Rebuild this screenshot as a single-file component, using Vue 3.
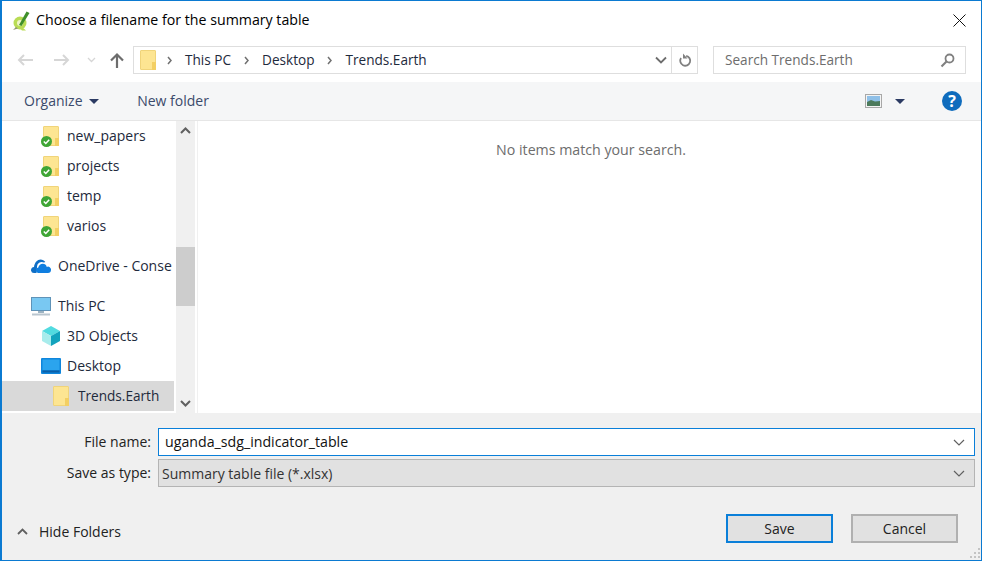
<template>
  <div class="dialog">
    <header class="titlebar">
      <svg class="app-icon" width="18" height="20" viewBox="0 0 18 20">
        <circle cx="8" cy="12" r="6.500" fill="#b9dc55" />
        <circle cx="8" cy="12" r="3" fill="#eef5c8" />
        <path d="M10 16l4 3.500h-4l-3-3z" fill="#b9dc55" />
        <path d="M7 14 14.500.5 17.500 2 9.500 15z" fill="#3f8f2a" />
        <path d="M1 19l3-3 2 1.500z" fill="#8d9470" />
      </svg>
      <span class="title">Choose a filename for the summary table</span>
      <svg class="close" width="13" height="13" viewBox="0 0 13 13">
        <path d="M.5.5l12 12M12.500.5l-12 12" stroke="#111" stroke-width="1" fill="none" />
      </svg>
    </header>

    <nav class="navbar">
      <div class="arrows">
        <svg class="back" width="16" height="14" viewBox="0 0 16 14">
          <path d="M16 7H2M7 2 2 7l5 5" stroke="#d6d6d6" stroke-width="2" fill="none" />
        </svg>
        <svg class="forward" width="16" height="14" viewBox="0 0 16 14">
          <path d="M0 7h14M9 2l5 5-5 5" stroke="#d6d6d6" stroke-width="2" fill="none" />
        </svg>
        <svg class="recent" width="9" height="6" viewBox="0 0 9 6">
          <path d="M1 1l3.500 3.500L8 1" stroke="#d6d6d6" stroke-width="1.300" fill="none" />
        </svg>
        <svg class="up" width="16" height="16" viewBox="0 0 16 16">
          <path d="M8 16V3M2 8.500 8 2.500l6 6" stroke="#6d6d6d" stroke-width="2.200" fill="none" />
        </svg>
      </div>
      <div class="path">
        <span class="folder folder-path"></span>
        <template v-for="crumb in crumbs" :key="crumb">
          <svg class="crumb-sep" width="5" height="9" viewBox="0 0 5 9">
            <path d="M1 1l3 3.500L1 8" stroke="#707070" stroke-width="1.500" fill="none" />
          </svg>
          <span class="crumb">{{ crumb }}</span>
        </template>
        <svg class="path-chevron" width="12" height="8" viewBox="0 0 12 8">
          <path d="M1 1.500l5 5 5-5" stroke="#6d6d6d" stroke-width="1.800" fill="none" />
        </svg>
        <span class="refresh">
          <svg width="14" height="15" viewBox="0 0 14 15">
            <path d="M8.200 2.800A5 5 0 1 1 3 5" stroke="#808080" stroke-width="1.800" fill="none" />
            <path d="M5 .5v5h4.500z" fill="#808080" />
          </svg>
        </span>
      </div>
      <div class="search">
        <span class="crumb">Search Trends.Earth</span>
        <svg width="15" height="15" viewBox="0 0 15 15">
          <circle cx="9.500" cy="5.500" r="4" stroke="#808080" stroke-width="1.800" fill="none" />
          <path d="M6.500 8.500 1.500 13.500" stroke="#808080" stroke-width="2.200" />
        </svg>
      </div>
    </nav>

    <div class="toolbar">
      <span class="tool">Organize <i class="caret"></i></span>
      <span class="tool new-folder">New folder</span>
      <span class="view-button">
        <svg width="17" height="14" viewBox="0 0 17 14">
          <rect x=".5" y=".5" width="16" height="13" fill="#f4f4f4" stroke="#a8a8a8" />
          <rect x="2" y="2" width="13" height="10" fill="#8fc0e8" />
          <path d="M2 8l4-2 4 1.500 5-.5v5H2z" fill="#4c7a5c" />
        </svg>
        <i class="caret dark"></i>
      </span>
      <span class="help">?</span>
    </div>

    <div class="content">
      <aside class="sidebar">
        <ul class="tree">
          <li v-for="item in synced" :key="item" class="row indent">
            <span class="folder">
              <svg class="sync" width="11" height="11" viewBox="0 0 11 11">
                <circle cx="5.500" cy="5.500" r="5.500" fill="#3fa535" />
                <path d="M2.800 5.500l2 2 3.400-3.800" stroke="#fff" stroke-width="1.500" fill="none" />
              </svg>
            </span>
            <span>{{ item }}</span>
          </li>
          <li class="row spaced">
            <svg width="20" height="15" viewBox="0 0 20 15">
              <path d="M0 11.500a3.500 3.500 0 0 1 3-3.600C3.600 3.500 6.500.5 9.500.5c2 0 3.700.9 4.800 2.500l-1.300.6a4.800 4.800 0 0 0-7 4.700L5.500 14H3a3 3 0 0 1-3-2.500z" fill="#0f6fc6" />
              <path d="M7 14a2.800 2.800 0 0 1 .3-5.500c.5-2.400 2.400-3.800 4.500-3.800 1.900 0 3.500 1.200 4 3.200a3 3 0 0 1 4.200 3c0 1.600-1.200 3.100-3 3.100z" fill="#0f7ee0" />
            </svg>
            <span>OneDrive - Conse</span>
          </li>
          <li class="row spaced">
            <svg width="20" height="19" viewBox="0 0 20 19">
              <rect x=".5" y=".5" width="19" height="13" fill="#79c8f2" stroke="#5f93b8" />
              <rect x="7" y="14" width="6" height="2" fill="#9db3c2" />
              <rect x="1" y="16.500" width="18" height="2" fill="#b9c6cf" />
            </svg>
            <span>This PC</span>
          </li>
          <li class="row indent">
            <svg width="20" height="20" viewBox="0 0 20 20">
              <path d="M10 0l9 5-9 5-9-5z" fill="#52dbe0" />
              <path d="M1 5l9 5v10l-9-5z" fill="#a8ecec" />
              <path d="M19 5l-9 5v10l9-5z" fill="#12a3bd" />
            </svg>
            <span>3D Objects</span>
          </li>
          <li class="row indent">
            <svg width="20" height="16" viewBox="0 0 20 16">
              <rect width="20" height="16" rx="1" fill="#0f86dc" />
              <rect x="1.500" y="1.500" width="17" height="10.500" fill="#2ba4ee" />
              <rect x="1.500" y="12.500" width="17" height="2" fill="#0a5fa8" />
            </svg>
            <span>Desktop</span>
          </li>
          <li class="row indent-2 selected">
            <span class="folder"></span>
            <span>Trends.Earth</span>
          </li>
        </ul>
        <div class="scrollbar">
          <svg class="scroll-arrow" width="11" height="7" viewBox="0 0 11 7">
            <path d="M1 6l4.500-4.500L10 6" stroke="#606060" stroke-width="2" fill="none" />
          </svg>
          <div class="track"><div class="thumb"></div></div>
          <svg class="scroll-arrow" width="11" height="7" viewBox="0 0 11 7">
            <path d="M1 1l4.500 4.500L10 1" stroke="#606060" stroke-width="2" fill="none" />
          </svg>
        </div>
      </aside>
      <main class="files">No items match your search.</main>
    </div>

    <footer class="footer">
      <div class="field">
        <label>File name:</label>
        <div class="combo active">
          <span>uganda_sdg_indicator_table</span>
          <svg width="12" height="7" viewBox="0 0 12 7">
            <path d="M1 1l5 5 5-5" stroke="#606060" stroke-width="1.200" fill="none" />
          </svg>
        </div>
      </div>
      <div class="field">
        <label>Save as type:</label>
        <div class="combo readonly">
          <span>Summary table file (*.xlsx)</span>
          <svg width="12" height="7" viewBox="0 0 12 7">
            <path d="M1 1l5 5 5-5" stroke="#606060" stroke-width="1.200" fill="none" />
          </svg>
        </div>
      </div>
      <div class="actions">
        <span class="hide-folders">
          <svg width="11" height="7" viewBox="0 0 11 7">
            <path d="M1 6l4.500-4.500L10 6" stroke="#606060" stroke-width="1.800" fill="none" />
          </svg>
          Hide Folders
        </span>
        <button class="btn primary">Save</button>
        <button class="btn">Cancel</button>
      </div>
      <svg class="grip" width="11" height="11" viewBox="0 0 11 11">
        <path d="M8 0h2v2H8zM4 4h2v2H4zM8 4h2v2H8zM0 8h2v2H0zM4 8h2v2H4zM8 8h2v2H8z" fill="#c4c4c4" />
      </svg>
    </footer>
  </div>
</template>

<script setup>
const crumbs = ['This PC', 'Desktop', 'Trends.Earth'];
const synced = ['new_papers', 'projects', 'temp', 'varios'];
</script>

<style>
html,
body {
  margin: 0;
  background: #fff;
}
</style>

<style scoped>
.dialog {
  box-sizing: border-box;
  width: 982px;
  height: 561px;
  display: flex;
  flex-direction: column;
  position: relative;
  border: 1px solid #0b7ad1;
  border-left-width: 2px;
  font-family: 'Open Sans', 'Noto Sans', sans-serif;
  font-size: 13.6px;
  color: #1e2a3c;
  background: #fff;
  overflow: hidden;
}

.titlebar {
  height: 39px;
  flex: none;
  display: flex;
  align-items: center;
  padding-left: 10px;
  padding-right: 15px;
  box-sizing: border-box;
}

.title {
  margin-left: 6px;
  margin-bottom: 2px;
  font-size: 14.2px;
  color: #000;
  flex: 1;
}

.navbar {
  height: 42px;
  flex: none;
  display: flex;
  align-items: flex-start;
  padding-top: 6px;
  box-sizing: border-box;
}

.arrows {
  width: 131px;
  height: 27px;
  flex: none;
  display: flex;
  align-items: center;
  padding-left: 15px;
  box-sizing: border-box;
}

.forward {
  margin-left: 21px;
}

.recent {
  margin-left: 17px;
}

.up {
  margin-left: 13px;
}

.path {
  width: 565px;
  height: 28px;
  flex: none;
  box-sizing: border-box;
  border: 1px solid #dedede;
  display: flex;
  align-items: center;
  padding-left: 6px;
  gap: 13px;
}

.crumb {
  margin-bottom: 2px;
}

.crumb-sep {
  flex: none;
}

.path-chevron {
  margin-left: auto;
  margin-right: -9px;
}

.refresh {
  width: 25px;
  height: 100%;
  border-left: 1px solid #dedede;
  display: flex;
  align-items: center;
  justify-content: center;
}

.search {
  width: 253px;
  height: 28px;
  margin-left: 15px;
  flex: none;
  box-sizing: border-box;
  border: 1px solid #dedede;
  display: flex;
  align-items: center;
  justify-content: space-between;
  padding: 0 10px 0 11px;
  color: #6d6d6d;
}

.toolbar {
  height: 39px;
  flex: none;
  box-sizing: border-box;
  background: #f5f6f7;
  border-bottom: 1px solid #e6e6e6;
  display: flex;
  align-items: center;
  padding-left: 22px;
  padding-right: 19px;
  color: #3b4a6b;
}

.tool {
  margin-bottom: 2px;
  font-size: 14px;
}

.new-folder {
  margin-left: 38px;
}

.caret {
  display: inline-block;
  width: 0;
  height: 0;
  margin-left: 3px;
  vertical-align: 2px;
  border-left: 5px solid transparent;
  border-right: 5px solid transparent;
  border-top: 5px solid #2b3a63;
}

.view-button {
  margin-left: auto;
  display: flex;
  align-items: center;
  gap: 10px;
}

.help {
  width: 20px;
  height: 20px;
  margin-left: 37px;
  border-radius: 50%;
  background: #0f6cbd;
  color: #fff;
  font-weight: 700;
  font-size: 16px;
  line-height: 20px;
  text-align: center;
}

.content {
  height: 292px;
  flex: none;
  display: flex;
}

.sidebar {
  width: 195px;
  flex: none;
  display: flex;
  border-right: 1px solid #f0f0f0;
}

.tree {
  width: 172px;
  margin: 0;
  padding: 0;
  list-style: none;
  font-size: 14px;
  overflow: hidden;
  flex: none;
}

.row {
  height: 30px;
  display: flex;
  align-items: center;
  gap: 6px;
  white-space: nowrap;
}

.row > span:last-child {
  margin-bottom: 2px;
}

.row > svg {
  flex: none;
}

.spaced {
  margin-top: 10px;
  padding-left: 29px;
  gap: 7px;
}

.indent {
  padding-left: 39px;
}

.indent-2 {
  padding-left: 49px;
  gap: 7px;
  font-size: 13.6px;
}

.selected {
  background: #d9d9d9;
}

.folder {
  position: relative;
  display: block;
  flex: none;
  width: 16px;
  height: 20px;
  margin: 0 2px;
  box-sizing: border-box;
  border: 1px solid #f0d47a;
  border-radius: 1px;
  background: #fde592;
}

.folder::after {
  content: '';
  position: absolute;
  right: -1px;
  bottom: -1px;
  width: 4px;
  height: 8px;
  background: #f3cf63;
}

.row > .folder {
  margin-bottom: 0;
}

.folder-path {
  margin: 0 -2px 0 0;
}

.sync {
  position: absolute;
  left: -3px;
  bottom: -2px;
  z-index: 1;
}

.scrollbar {
  width: 19px;
  margin-left: 2px;
  flex: none;
  background: #f0f0f0;
  display: flex;
  flex-direction: column;
  align-items: center;
}

.scroll-arrow {
  flex: none;
  margin: 6px 0;
}

.track {
  flex: 1;
  width: 100%;
  padding-top: 107px;
  box-sizing: border-box;
}

.thumb {
  height: 59px;
  background: #cdcdcd;
}

.files {
  flex: 1;
  padding-top: 19px;
  padding-left: 3px;
  font-size: 14.2px;
  text-align: center;
  color: #6d6d6d;
  box-sizing: border-box;
}

.footer {
  flex: 1;
  background: #f0f0f0;
  box-sizing: border-box;
  padding: 15px 6px 0 0;
  position: relative;
}

.field {
  display: flex;
  align-items: center;
  margin-bottom: 3px;
}

.field label {
  width: 149px;
  flex: none;
  font-size: 14px;
  text-align: right;
  margin-right: 7px;
  margin-bottom: 2px;
  color: #222;
}

.combo {
  flex: 1;
  font-size: 14px;
  box-sizing: border-box;
  display: flex;
  align-items: center;
  justify-content: space-between;
  padding-right: 9px;
}

.active {
  height: 28px;
  border: 1px solid #0a7fd9;
  background: #fff;
  padding-left: 6px;
  color: #111;
}

.active span {
  font-size: 14.2px;
  margin-bottom: 2px;
}

.readonly {
  height: 28px;
  border: 1px solid #b4b4b4;
  background: #e1e1e1;
  padding-left: 3px;
  color: #333;
}

.actions {
  display: flex;
  align-items: center;
  margin-top: 27px;
  padding-left: 15px;
  padding-right: 17px;
}

.hide-folders {
  display: flex;
  align-items: center;
  gap: 11px;
  margin-top: 6px;
  margin-right: auto;
  font-size: 14px;
  color: #222;
}

.btn {
  width: 107px;
  height: 29px;
  padding: 0;
  box-sizing: border-box;
  margin-left: 18px;
  border: 2px solid #b0b0b0;
  background: #e1e1e1;
  font: inherit;
  font-size: 14px;
  color: #222;
}

.btn.primary {
  border-color: #0a7fd9;
}

.grip {
  position: absolute;
  right: 0;
  bottom: 1px;
}
</style>
